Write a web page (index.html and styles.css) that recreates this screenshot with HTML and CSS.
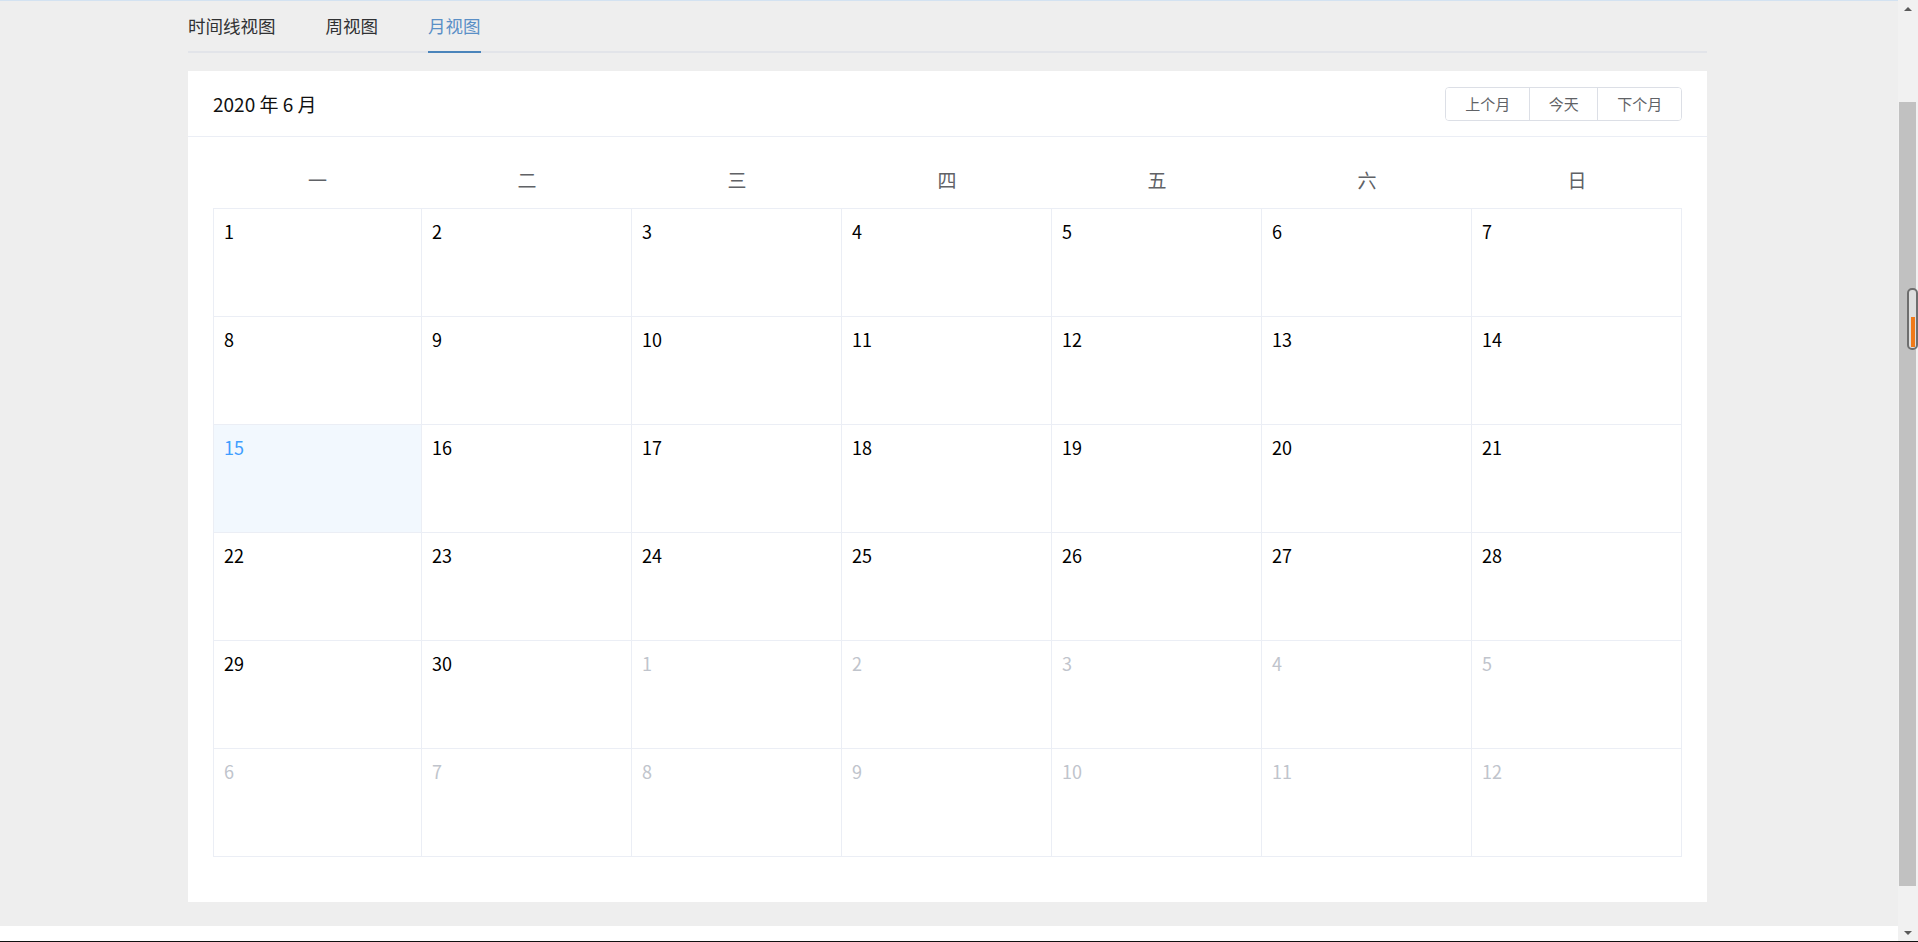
FILE: index.html
```html
<!DOCTYPE html>
<html lang="zh-CN">
<head>
<meta charset="utf-8">
<title>月视图</title>
<link rel="stylesheet" href="styles.css">
</head>
<body>
<div class="window">
  <div class="viewport">
    <div class="page">
      <div class="page-main">
        <div class="container">
          <div class="tabs-nav">
            <div class="tab"><span class="tab-label">时间线视图</span></div>
            <div class="tab"><span class="tab-label">周视图</span></div>
            <div class="tab active"><span class="tab-label">月视图</span></div>
          </div>
          <div class="calendar">
            <div class="cal-header">
              <div class="cal-title">2020 年 6 月</div>
              <div class="btn-group">
                <button class="btn">上个月</button>
                <button class="btn">今天</button>
                <button class="btn">下个月</button>
              </div>
            </div>
            <div class="cal-body">
              <div class="weekdays">
                <div class="wd">一</div><div class="wd">二</div><div class="wd">三</div><div class="wd">四</div><div class="wd">五</div><div class="wd">六</div><div class="wd">日</div>
              </div>
              <div class="grid">
                <div class="day">1</div><div class="day">2</div><div class="day">3</div><div class="day">4</div><div class="day">5</div><div class="day">6</div><div class="day">7</div>
                <div class="day">8</div><div class="day">9</div><div class="day">10</div><div class="day">11</div><div class="day">12</div><div class="day">13</div><div class="day">14</div>
                <div class="day today">15</div><div class="day">16</div><div class="day">17</div><div class="day">18</div><div class="day">19</div><div class="day">20</div><div class="day">21</div>
                <div class="day">22</div><div class="day">23</div><div class="day">24</div><div class="day">25</div><div class="day">26</div><div class="day">27</div><div class="day">28</div>
                <div class="day">29</div><div class="day">30</div><div class="day other">1</div><div class="day other">2</div><div class="day other">3</div><div class="day other">4</div><div class="day other">5</div>
                <div class="day other">6</div><div class="day other">7</div><div class="day other">8</div><div class="day other">9</div><div class="day other">10</div><div class="day other">11</div><div class="day other">12</div>
              </div>
            </div>
          </div>
        </div>
      </div>
      <div class="page-rest"></div>
    </div>
    <div class="scrollbar">
      <div class="sb-btn"><span class="arrow-up"></span></div>
      <div class="sb-track"><div class="sb-thumb"></div></div>
      <div class="sb-btn"><span class="arrow-down"></span></div>
      <div class="sb-grip"><div class="sb-grip-fill"></div></div>
    </div>
  </div>
  <div class="status-line"></div>
</div>
</body>
</html>
```

FILE: styles.css
```css
html, body {
  margin: 0;
  padding: 0;
}
body {
  width: 1918px;
  height: 942px;
  overflow: hidden;
  font-family: "Noto Sans CJK SC", "Noto Sans", sans-serif;
  background: #ffffff;
}
.window {
  display: flex;
  flex-direction: column;
  height: 942px;
}
.viewport {
  display: flex;
  height: 941px;
}
.page {
  flex: 1;
  display: flex;
  flex-direction: column;
}
.page-main {
  height: 926px;
  box-sizing: border-box;
  background: #eeeeee;
  border-top: 1px solid #d3e2f1;
}
.page-rest {
  flex: 1;
  background: #ffffff;
}
.status-line {
  height: 1px;
  background: #111111;
}
.container {
  width: 1519px;
  margin-left: 188px;
}

/* tabs */
.tabs-nav {
  display: flex;
  border-bottom: 2px solid #e2e4e9;
}
.tab {
  padding: 0 25px;
}
.tab:first-child {
  padding-left: 0;
}
.tab-label {
  display: block;
  height: 50px;
  line-height: 50px;
  font-size: 17.5px;
  color: #303133;
  border-bottom: 2px solid transparent;
  margin-bottom: -2px;
}
.tab.active .tab-label {
  color: #5a8fc6;
  border-bottom-color: #4a84bb;
}

/* calendar card */
.calendar {
  margin-top: 18px;
  background: #ffffff;
}
.cal-header {
  display: flex;
  justify-content: space-between;
  align-items: center;
  padding: 16px 25px 15px;
  border-bottom: 1px solid #ebeef5;
}
.cal-title {
  font-size: 19px;
  color: #111111;
  line-height: 34px;
}
.btn-group {
  display: flex;
  border: 1px solid #dcdfe6;
  border-radius: 4px;
  overflow: hidden;
}
.btn {
  font-family: inherit;
  font-size: 15px;
  color: #606266;
  background: #ffffff;
  border: 0;
  margin: 0;
  height: 32px;
  line-height: 32px;
  padding: 0 18.75px;
}
.btn + .btn {
  border-left: 1px solid #dcdfe6;
}
.cal-body {
  padding: 15px 25px 45px;
}
.weekdays {
  display: grid;
  grid-template-columns: 209px repeat(6, 1fr);
  padding: 15px 0;
}
.wd {
  text-align: center;
  font-size: 19px;
  line-height: 26px;
  color: #606266;
}
.grid {
  display: grid;
  grid-template-columns: 208px repeat(6, 1fr);
  grid-auto-rows: 108px;
  border-top: 1px solid #ebeef5;
  border-left: 1px solid #ebeef5;
}
.day {
  box-sizing: border-box;
  border-right: 1px solid #ebeef5;
  border-bottom: 1px solid #ebeef5;
  padding: 10px;
  font-size: 18px;
  line-height: 25px;
  color: #000000;
}
.day.today {
  background: #f2f8fe;
  color: #409eff;
}
.day.other {
  color: #c0c4cc;
}

/* scrollbar chrome */
.scrollbar {
  position: relative;
  width: 20px;
  display: flex;
  flex-direction: column;
  background: #f1f1f1;
}
.sb-btn {
  height: 17px;
  display: flex;
  align-items: center;
  justify-content: center;
  padding-right: 1px;
}
.arrow-up {
  width: 0;
  height: 0;
  border-left: 4px solid transparent;
  border-right: 4px solid transparent;
  border-bottom: 4px solid #5a5a5a;
}
.arrow-down {
  width: 0;
  height: 0;
  border-left: 4px solid transparent;
  border-right: 4px solid transparent;
  border-top: 4px solid #5a5a5a;
}
.sb-track {
  flex: 1;
  padding-left: 1px;
  padding-right: 2px;
}
.sb-thumb {
  margin-top: 85px;
  height: 784px;
  background: #c1c1c1;
}
.sb-grip {
  position: absolute;
  left: 9px;
  top: 288px;
  width: 7px;
  height: 57px;
  border: 2px solid #6e6e6e;
  border-radius: 5px;
  background: #dedede;
  display: flex;
  flex-direction: column;
  justify-content: flex-end;
  align-items: center;
  padding-bottom: 1px;
}
.sb-grip-fill {
  width: 4px;
  height: 30px;
  background: #f07a1a;
}
```
